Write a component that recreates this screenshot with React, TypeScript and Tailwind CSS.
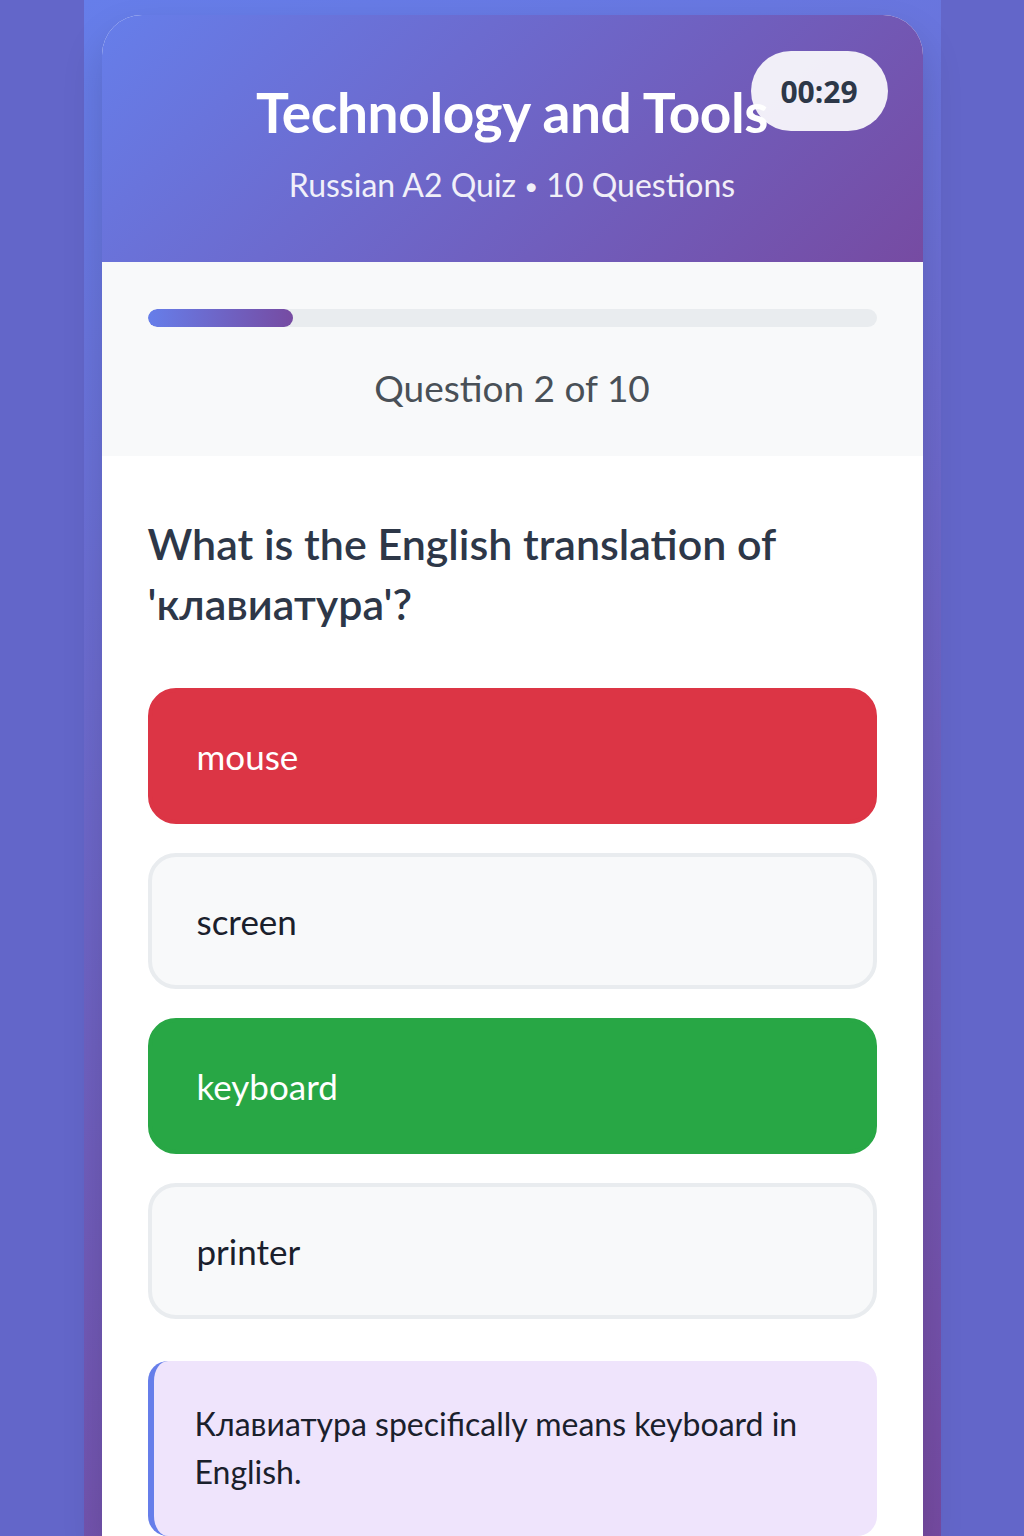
import React from 'react';

const options = [
  { label: 'mouse', state: 'wrong' },
  { label: 'screen', state: 'idle' },
  { label: 'keyboard', state: 'right' },
  { label: 'printer', state: 'idle' },
];

const optionClass = (state: string) => {
  if (state === 'wrong') return 'bg-[#dc3545] border-[#dc3545] text-white';
  if (state === 'right') return 'bg-[#28a745] border-[#28a745] text-white';
  return 'bg-[#f8f9fa] border-[#e9ecef] text-[#1a202c]';
};

export default function App() {
  const current = 2;
  const total = 10;

  return (
    <div className="min-h-[1536px] h-[1536px] overflow-hidden bg-[#6366c9] flex justify-center" style={{ fontFamily: 'Lato, "Noto Sans", sans-serif' }}>
      <div className="w-[857px] h-full bg-[linear-gradient(160deg,#667eea_0%,#764ba2_100%)] px-[18px] pt-[15px]">
        <div className="bg-white rounded-t-[40px] overflow-hidden shadow-[0_20px_40px_rgba(0,0,0,0.15)] h-full">
          {/* header */}
          <div className="relative bg-[linear-gradient(135deg,#667eea_0%,#764ba2_100%)] pt-[66px] pb-[58px] text-center text-white">
            <h1 className="text-[55px] leading-[62px] font-bold tracking-[-0.4px]">Technology and Tools</h1>
            <p className="mt-[23px] text-[32px] leading-[38px] h-[38px] opacity-90">Russian A2 Quiz <span className="text-[24px] align-[2px]">•</span> 10 Questions</p>
            <div className="absolute right-[35px] top-[36px] w-[137px] h-[80px] rounded-full bg-white/90 flex items-center justify-center">
              <span className="text-[30px] font-bold text-[#2d3748]" style={{ fontFamily: '"Open Sans", sans-serif' }}>00:29</span>
            </div>
          </div>

          {/* progress */}
          <div className="bg-[#f8f9fa] px-[46px] pt-[47px] pb-[48px]">
            <div className="h-[18px] rounded-full bg-[#e9ecef] overflow-hidden">
              <div
                className="h-full rounded-full bg-[linear-gradient(90deg,#667eea,#764ba2)]"
                style={{ width: `${(current / total) * 100}%` }}
              />
            </div>
            <div className="mt-[41px] text-center text-[37px] leading-[40px] text-[#495057]">
              Question {current} of {total}
            </div>
          </div>

          {/* body */}
          <div className="px-[46px] pt-[58px]">
            <h2 className="text-[43px] leading-[60px] font-semibold text-[#2d3748]">
              What is the English translation of 'клавиатура'?
            </h2>

            <div className="mt-[54px] flex flex-col gap-[29px]">
              {options.map(o => (
                <div
                  key={o.label}
                  className={`h-[136px] rounded-[28px] border-4 pl-[45px] flex items-center text-[35px] ${optionClass(o.state)}`}
                >
                  {o.label}
                </div>
              ))}
            </div>

            <div className="mt-[42px] rounded-[20px] border-l-[6px] border-[#667eea] bg-[#efe4fc] pl-[41px] pr-[30px] pt-[39px] pb-[40px] text-[32px] leading-[48px] text-[#1a202c]">
              Клавиатура specifically means keyboard in English.
            </div>
          </div>
        </div>
      </div>
    </div>
  );
}
